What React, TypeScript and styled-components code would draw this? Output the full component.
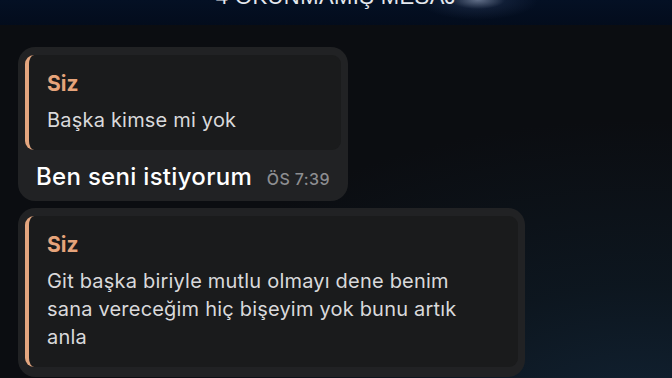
import React from "react";
import styled, { createGlobalStyle } from "styled-components";

const Global = createGlobalStyle`
  html, body { margin: 0; padding: 0; background: #0b0d11; }
  body { width: 672px; height: 378px; overflow: hidden; font-family: Inter, "Open Sans", "Liberation Sans", sans-serif; }
`;

const Screen = styled.div`
  width: 672px;
  height: 378px;
  overflow: hidden;
  display: flex;
  flex-direction: column;
  background:
    radial-gradient(ellipse 520px 300px at 640px 420px, #112233 0%, rgba(14, 28, 40, 0.6) 45%, rgba(11, 13, 17, 0) 100%),
    #0b0d11;
`;

const Banner = styled.div`
  position: relative;
  height: 25px;
  flex: none;
  overflow: hidden;
  background:
    radial-gradient(ellipse 60px 20px at 478px 0px, rgba(190, 205, 235, 0.5) 0%, rgba(60, 80, 120, 0.22) 45%, rgba(3, 11, 26, 0) 100%),
    linear-gradient(180deg, #041024 0%, #030c1c 100%);
  display: flex;
  justify-content: center;
`;

const BannerText = styled.div`
  margin-top: -14px;
  font-family: "Liberation Sans", Arial, sans-serif;
  font-size: 22px;
  line-height: 22px;
  letter-spacing: 0.4px;
  color: #e4e8ee;
  white-space: nowrap;
`;

const Feed = styled.div`
  display: flex;
  flex-direction: column;
  align-items: flex-start;
  gap: 7px;
  padding: 22px 0 0 18px;
`;

const Bubble = styled.div<{ $w: number }>`
  width: ${(p) => p.$w}px;
  box-sizing: border-box;
  background: #212224;
  border-radius: 17px;
  padding: 8px 7px 10px 7px;
`;

const Quote = styled.div`
  background: #1a1b1c;
  border-radius: 9px;
  border-left: 4px solid #e4a67f;
  padding: 17px 12px 16px 18px;
`;

const Sender = styled.div`
  color: #e6a47b;
  font-size: 21px;
  font-weight: 700;
  line-height: 24px;
  margin-bottom: 10px;
`;

const QuoteText = styled.div`
  color: #d9d9db;
  font-size: 20px;
  line-height: 28px;
  letter-spacing: 0.2px;
`;

const Footer = styled.div`
  display: flex;
  align-items: baseline;
  padding: 13px 11px 0 11px;
`;

const MainText = styled.div`
  color: #ffffff;
  font-size: 24px;
  font-weight: 500;
  line-height: 28px;
  letter-spacing: 0.3px;
  flex: 1;
`;

const Time = styled.span`
  color: #8d8e91;
  font-size: 16px;
  font-weight: 500;
  letter-spacing: 0.4px;
`;

export default function App() {
  return (
    <>
      <Global />
      <Screen>
        <Banner>
          <BannerText>4 OKUNMAMIŞ MESAJ</BannerText>
        </Banner>
        <Feed>
          <Bubble $w={330}>
            <Quote>
              <Sender>Siz</Sender>
              <QuoteText>Başka kimse mi yok</QuoteText>
            </Quote>
            <Footer>
              <MainText>Ben seni istiyorum</MainText>
              <Time>ÖS 7:39</Time>
            </Footer>
          </Bubble>
          <Bubble $w={507}>
            <Quote>
              <Sender>Siz</Sender>
              <QuoteText>
                Git başka biriyle mutlu olmayı dene benim
                <br />
                sana vereceğim hiç bişeyim yok bunu artık
                <br />
                anla
              </QuoteText>
            </Quote>
          </Bubble>
        </Feed>
      </Screen>
    </>
  );
}
